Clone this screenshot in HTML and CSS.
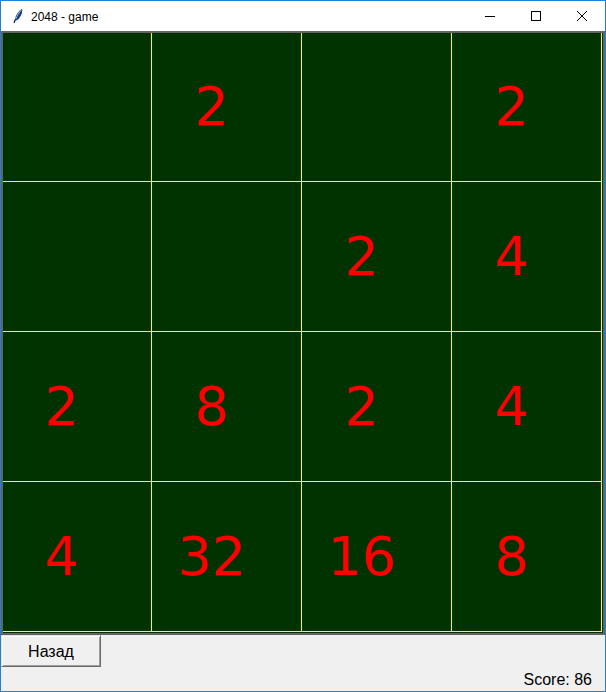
FILE: index.html
```html
<!DOCTYPE html>
<html>
<head>
<meta charset="utf-8">
<title>2048 - game</title>
<link rel="stylesheet" href="styles.css">
</head>
<body>
<div class="window">
  <div class="titlebar">
    <svg class="app-icon" width="16" height="16" viewBox="0 0 16 16">
      <path d="M4 15 L5 11 C5.8 7 8.5 3 12 0.8 C13 3 11.5 7.5 9 10.5 C8 11.7 6.3 12.8 5.2 12.3 Z" fill="#1e3a78"/>
      <path d="M5.6 11.2 C7 8 9 4.5 11.5 1.8" stroke="#9ec4f0" stroke-width="1" fill="none"/>
      <path d="M4 15 L5.4 11.4" stroke="#0b1a3c" stroke-width="1.2"/>
    </svg>
    <span class="title">2048 - game</span>
    <div class="controls">
      <span class="ctl">
        <svg width="10" height="10" viewBox="0 0 10 10"><path d="M0 5.5 H10" stroke="#000" stroke-width="1"/></svg>
      </span>
      <span class="ctl">
        <svg width="10" height="10" viewBox="0 0 10 10"><rect x="0.5" y="0.5" width="9" height="9" fill="none" stroke="#000" stroke-width="1"/></svg>
      </span>
      <span class="ctl">
        <svg width="10" height="10" viewBox="0 0 10 10"><path d="M0 0 L10 10 M10 0 L0 10" stroke="#000" stroke-width="1"/></svg>
      </span>
    </div>
  </div>
  <div class="canvas">
    <div class="board">
      <div class="cell"></div>
      <div class="cell">2</div>
      <div class="cell"></div>
      <div class="cell">2</div>
      <div class="cell"></div>
      <div class="cell"></div>
      <div class="cell">2</div>
      <div class="cell">4</div>
      <div class="cell">2</div>
      <div class="cell">8</div>
      <div class="cell">2</div>
      <div class="cell">4</div>
      <div class="cell">4</div>
      <div class="cell">32</div>
      <div class="cell">16</div>
      <div class="cell">8</div>
    </div>
  </div>
  <div class="panel">
    <div class="btn-row"><button class="btn">Назад</button></div>
    <div class="score-row"><span class="score">Score: 86</span></div>
  </div>
</div>
</body>
</html>
```
FILE: styles.css
```css
html, body {
  margin: 0;
  padding: 0;
  background: #ffffff;
}
.window {
  width: 606px;
  height: 692px;
  box-sizing: border-box;
  border: 1px solid #1883d7;
  display: flex;
  flex-direction: column;
  background: #f0f0f0;
  overflow: hidden;
}
.titlebar {
  height: 30px;
  flex: none;
  background: #ffffff;
  display: flex;
  align-items: center;
  font-family: "Liberation Sans", Arial, sans-serif;
  font-size: 12px;
  color: #000;
}
.app-icon {
  margin-left: 9px;
  margin-right: 5px;
  flex: none;
}
.title {
  margin-top: 1px;
}
.controls {
  margin-left: auto;
  display: flex;
  height: 30px;
}
.ctl {
  width: 46px;
  height: 30px;
  display: flex;
  align-items: center;
  justify-content: center;
}
.ctl svg {
  display: block;
}
.canvas {
  flex: none;
  width: 600px;
  height: 600px;
  border: 2px solid #646464;
  background: #003300;
  overflow: hidden;
}
.board {
  margin: -2px 0 0 -2px;
  display: grid;
  grid-template-columns: repeat(4, 150px);
  grid-template-rows: repeat(4, 150px);
  width: max-content;
  border-right: 1px solid #ffff00;
  border-bottom: 1px solid #ffff00;
}
.cell {
  box-sizing: border-box;
  border-left: 1px solid #ffff00;
  border-top: 1px solid #ffff00;
  display: flex;
  align-items: center;
  justify-content: center;
  padding-right: 29px;
  padding-top: 1px;
  font-family: "DejaVu Sans", Verdana, sans-serif;
  font-size: 54px;
  line-height: 1;
  color: #ff0000;
}
.panel {
  flex: 1;
  display: flex;
  flex-direction: column;
  background: #f0f0f0;
}
.btn-row {
  display: flex;
}
.btn {
  width: 100px;
  height: 32px;
  margin: 0;
  padding: 2px 0 0 0;
  box-sizing: border-box;
  background: #f0f0f0;
  border: 1px solid;
  border-color: #e3e3e3 #696969 #696969 #e3e3e3;
  box-shadow: inset 1px 1px 0 #ffffff, inset -1px -1px 0 #a0a0a0;
  font-family: "Liberation Sans", Arial, sans-serif;
  font-size: 16px;
  color: #000;
}
.score-row {
  display: flex;
  justify-content: flex-end;
  padding-right: 13px;
  margin-top: 4px;
}
.score {
  font-family: "Liberation Sans", Arial, sans-serif;
  font-size: 16px;
  color: #000;
}
```
